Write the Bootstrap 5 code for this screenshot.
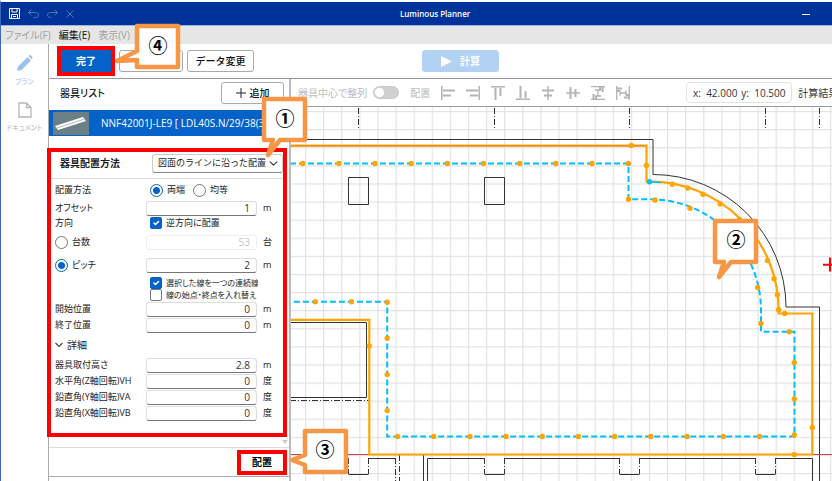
<!DOCTYPE html>
<html lang="ja">
<head>
<meta charset="utf-8">
<meta name="viewport" content="width=device-width, initial-scale=1">
<title>Luminous Planner</title>
<link href="https://cdn.jsdelivr.net/npm/bootstrap@5.3.0/dist/css/bootstrap.min.css" rel="stylesheet">
<style>
body{font-family:"Open Sans","Noto Sans CJK JP",sans-serif;font-size:10px;line-height:14px;color:#222;font-feature-settings:"palt";background:#fff;overflow-x:hidden}
.app{border-left:1px solid #3f68b8;border-top:2px solid #fff;min-height:100vh}
.titlebar{background:#039;height:24px;color:#fff;border-bottom:1px solid #9fb2dc}
.titlebar .side{flex:0 0 48%}
.titlebar .side-end{padding-right:22px}
.app-name{font-size:8px}
.titlebar button,.tool{background:none;border:0;padding:0;line-height:0;color:inherit}
.menubar{background:#e6e6e6;height:18px;font-size:10px;line-height:18px;gap:8px;padding-left:4px}
.menubar a{color:#a0a0a0;text-decoration:none}
.menubar a.current{color:#111}
.rail{width:47px;flex:none;font-size:7px;padding-top:11px;gap:14px}
.rail a{color:#b5b5b5;text-decoration:none;line-height:12px}
.rail a.current{color:#9cc3ec}
.workspace{border-left:1px solid #aaa;min-width:0}
.actions{height:35px;border-bottom:1px solid #999;padding-left:8px;gap:4px}
.mark-red{border:4px solid red}
.btn-app{--bs-btn-padding-y:0;--bs-btn-padding-x:0;--bs-btn-font-size:10px;--bs-btn-border-radius:3px;--bs-btn-line-height:14px;--bs-btn-color:#111;--bs-btn-border-color:#aaa;--bs-btn-bg:#fff;height:22px;font-weight:500}
.btn-done{--bs-btn-color:#fff;--bs-btn-bg:#0562c8;--bs-btn-border-color:#0562c8;--bs-btn-border-radius:0;width:50px;font-weight:700}
.btn-mid{width:64px}
.btn-data{width:67px}
.btn-calc{--bs-btn-color:#fff;--bs-btn-bg:#b3d1f2;--bs-btn-border-color:#b3d1f2;width:77px;font-weight:700;margin-left:164px}
.panel{width:242px;flex:none;border-right:2px solid #bbb}
.panel-head{height:31px;padding:0 5px 3px 11px;font-weight:500}
.btn-add{width:63px}
.fixture{background:#0562c8;color:#fff;height:26px;padding-left:4px;gap:12px;white-space:nowrap;overflow:hidden}
.method{margin:12px 2px 0 -2px;padding-bottom:12px}
.method-head{height:27px;border-bottom:1px solid #ddd;padding:0 0 4px 9px;font-weight:700}
.method select{width:131px;height:19px;border:1px solid #ccc;border-bottom-color:#888;border-radius:3px;font-size:9px;font-weight:400;line-height:14px;padding:0 16px 0 5px;background-size:9px;background-position:right 4px center}
.line{padding-left:4px;font-size:9px}
.h12{height:12px}.h14{height:14px}.h16{height:16px}.h22{height:22px}.h24{height:24px}
.line .cap{width:91px;flex:none;white-space:nowrap}
.num{width:111px;flex:none;height:15px;border:1px solid #ddd;border-bottom-color:#777;border-radius:3px;text-align:right;font-size:10px;line-height:13px;padding:0 6px;color:#333;background:#fff}
.num:disabled{color:#c4c4c4;border-color:#eee;background:#fff}
.unit{padding-left:6px}
.line .form-check-input{margin:0;width:13px;height:13px;border-color:#777;flex:none}
.line .form-check-input[type=checkbox]{width:12px;height:12px;border-radius:2px}
.line .form-check-input:checked{background-color:#0562c8;border-color:#0562c8}
.line .form-check-input[type=radio]:checked{background:radial-gradient(#0562c8 0 3px,#fff 4px)}
.opts{width:112px;overflow:hidden;white-space:nowrap}
.small-opts{font-size:8px}
.detail{font-size:10px;line-height:14px}
.scroll-end{height:10px;padding:0 1px}
.foot{height:30px;border-top:1px solid #ddd;border-bottom:1px solid #aaa;padding-right:2px}
.btn-place{width:50px;height:25px;background:#fff;font-weight:700;font-size:10px;padding:0;line-height:14px}
.drawing{min-width:0}
.arrange{height:28px;border-bottom:1px solid #999;padding-left:7px;color:#bbb;white-space:nowrap;gap:11px}
.arrange .form-check-input{width:26px;height:13px;margin:0;background-color:#d0d0d0;border-color:#c8c8c8;opacity:1;--bs-form-switch-bg:url("data:image/svg+xml,%3csvg xmlns='http://www.w3.org/2000/svg' viewBox='-4 -4 8 8'%3e%3ccircle r='3.4' fill='%23fff'/%3e%3c/svg%3e")}
.arrange .form-switch{min-height:0;padding:0;gap:6px}
.readout{gap:6px;margin-left:45px;color:#333}
.coords{border:1px solid #e3e3e3;border-radius:4px;height:21px;width:106px;flex:none}
.callout-note{position:absolute;overflow:visible;pointer-events:none}
.callout-note path{fill:#fff;stroke:#f79646;stroke-width:4.5;stroke-linejoin:round}
.callout-note text{font:700 19px "Noto Sans CJK JP",sans-serif;text-anchor:middle;fill:#000}
.note-1{left:262px;top:97px}.note-2{left:713px;top:219px}.note-3{left:303px;top:429px}.note-4{left:135px;top:24px}
</style>
</head>
<body>
<div class="app position-relative">
  <header class="titlebar d-flex align-items-center">
    <div class="side d-flex align-items-center gap-2 ps-2">
      <button aria-label="保存"><svg width="11" height="11" viewBox="0 0 11 11" fill="none" stroke="#fff"><path d="M.5.5h10v10h-10zM3 .5v3.500h5v-3.500M2.500 10.500v-4h6v4M4 8.500h3"/></svg></button>
      <button aria-label="元に戻す"><svg width="11" height="9" viewBox="0 0 11 9" fill="none" stroke="#5274bd"><path d="M3.500.5l-3 3 3 3M.5 3.500h7c4 0 4 5 0 5h-2"/></svg></button>
      <button aria-label="やり直し"><svg width="11" height="9" viewBox="0 0 11 9" fill="none" stroke="#5274bd"><path d="M7.500.5l3 3-3 3M10.500 3.500h-7c-4 0-4 5 0 5h1"/></svg></button>
      <button aria-label="削除"><svg width="8" height="8" viewBox="0 0 8 8" stroke="#5274bd"><path d="M.5.5l7 7M7.500.5l-7 7"/></svg></button>
    </div>
    <div class="fw-semibold app-name text-nowrap">Luminous Planner</div>
    <div class="side-end flex-fill d-flex justify-content-end">
      <button aria-label="最小化"><svg width="8" height="8" viewBox="0 0 8 8" stroke="#fff"><path d="M0 4.500h8"/></svg></button>
    </div>
  </header>
  <nav class="menubar d-flex">
    <a href="#">ファイル(F)</a><a href="#" class="current">編集(E)</a><a href="#">表示(V)</a>
  </nav>
  <div class="d-flex">
    <nav class="rail d-flex flex-column align-items-center">
      <a href="#" class="current d-flex flex-column align-items-center gap-1"><svg width="17" height="17" viewBox="0 0 17 17" fill="#9cc3ec"><path d="M1 16l1-4.500L11.500 2l3.500 3.500L5.500 15zM12.500 1l1-.8c1-.6 3.500 1.800 3 3l-.8 1z"/></svg>プラン</a>
      <a href="#" class="d-flex flex-column align-items-center gap-1"><svg width="14" height="16" viewBox="0 0 14 16" fill="none" stroke="#b5b5b5" stroke-width="1.300"><path d="M1 1h7.500l4.500 4.500V15H1zM8.500 1v4.500H13"/></svg>ドキュメント</a>
    </nav>
    <div class="workspace flex-fill">
      <div class="actions d-flex align-items-center">
        <div class="mark-red d-flex"><button class="btn btn-app btn-done">完了</button></div>
        <button class="btn btn-app btn-mid" aria-label="キャンセル"></button>
        <button class="btn btn-app btn-data">データ変更</button>
        <button class="btn btn-app btn-calc d-flex align-items-center justify-content-center gap-2"><svg width="11" height="11" viewBox="0 0 11 11" fill="#fff"><path d="M0 0l11 5.500L0 11z"/></svg>計算</button>
      </div>
      <div class="d-flex">
        <section class="panel">
          <div class="panel-head d-flex align-items-center justify-content-between">
            <span>器具リスト</span>
            <button class="btn btn-app btn-add d-flex align-items-center justify-content-center gap-1"><svg width="10" height="10" viewBox="0 0 10 10" stroke="#222"><path d="M5 0v10M0 5h10"/></svg>追加</button>
          </div>
          <div class="fixture d-flex align-items-center">
            <svg class="flex-shrink-0" width="36" height="23" viewBox="0 0 36 23"><path fill="#6b7f86" d="M0 0h36v23H0z"/><path fill="#fff" d="M2 14L30 5l3 4L5 18z"/><path stroke="#b5bdc0" stroke-width="1.200" d="M4 16L31.500 7"/></svg>
            <span>NNF42001J-LE9 [ LDL40S.N/29/38(3</span>
          </div>
          <form class="method mark-red">
            <div class="method-head d-flex align-items-center justify-content-between">
              <label for="how">器具配置方法</label>
              <select id="how" class="form-select"><option>図面のラインに沿った配置</option></select>
            </div>
            <div class="line h22 d-flex align-items-center"><span class="cap">配置方法</span>
              <span class="opts d-flex align-items-center ps-1 gap-1"><input class="form-check-input" type="radio" name="dist" id="d1" checked><label for="d1" class="me-1">両端</label><input class="form-check-input" type="radio" name="dist" id="d2"><label for="d2">均等</label></span></div>
            <div class="line h14 d-flex align-items-center"><label class="cap" for="off">オフセット</label><input class="num" id="off" value="1"><span class="unit">m</span></div>
            <div class="line h16 d-flex align-items-center"><span class="cap">方向</span><span class="opts d-flex align-items-center gap-1 ps-1"><input class="form-check-input" type="checkbox" id="rev" checked><label for="rev">逆方向に配置</label></span></div>
            <div class="line h22 d-flex align-items-center"><span class="cap d-flex align-items-center gap-1"><input class="form-check-input" type="radio" name="by" id="b1"><label for="b1">台数</label></span><input class="num" value="53" aria-label="台数" disabled><span class="unit">台</span></div>
            <div class="line h24 d-flex align-items-center"><span class="cap d-flex align-items-center gap-1"><input class="form-check-input" type="radio" name="by" id="b2" checked><label for="b2">ピッチ</label></span><input class="num" value="2" aria-label="ピッチ"><span class="unit">m</span></div>
            <div class="line h12 d-flex align-items-center"><span class="cap"></span><span class="opts small-opts d-flex align-items-center gap-1 ps-1"><input class="form-check-input" type="checkbox" id="join" checked><label for="join">選択した線を一つの連続線</label></span></div>
            <div class="line h12 d-flex align-items-center"><span class="cap"></span><span class="opts small-opts d-flex align-items-center gap-1 ps-1"><input class="form-check-input" type="checkbox" id="swap"><label for="swap">線の始点・終点を入れ替え</label></span></div>
            <div class="line h16 d-flex align-items-center"><label class="cap" for="st">開始位置</label><input class="num" id="st" value="0"><span class="unit">m</span></div>
            <div class="line h16 d-flex align-items-center"><label class="cap" for="en">終了位置</label><input class="num" id="en" value="0"><span class="unit">m</span></div>
            <div class="line h24 d-flex align-items-center"><button type="button" class="tool d-flex align-items-center gap-1"><svg width="8" height="8" viewBox="0 0 8 8" fill="none" stroke="#444" stroke-width="1.200"><path d="M.5 2L4 5.500 7.500 2"/></svg><span class="detail">詳細</span></button></div>
            <div class="line h16 d-flex align-items-center"><label class="cap" for="hh">器具取付高さ</label><input class="num" id="hh" value="2.8"><span class="unit">m</span></div>
            <div class="line h16 d-flex align-items-center"><label class="cap" for="vh">水平角(Z軸回転)VH</label><input class="num" id="vh" value="0"><span class="unit">度</span></div>
            <div class="line h16 d-flex align-items-center"><label class="cap" for="va">鉛直角(Y軸回転)VA</label><input class="num" id="va" value="0"><span class="unit">度</span></div>
            <div class="line h16 d-flex align-items-center"><label class="cap" for="vb">鉛直角(X軸回転)VB</label><input class="num" id="vb" value="0"><span class="unit">度</span></div>
          </form>
          <div class="scroll-end d-flex align-items-center justify-content-end"><svg width="6" height="4" viewBox="0 0 6 4" fill="#ccc"><path d="M0 0h6L3 4z"/></svg></div>
          <div class="foot d-flex align-items-center justify-content-end"><button class="btn-place mark-red">配置</button></div>
        </section>
        <section class="drawing flex-fill">
          <div class="arrange d-flex align-items-center">
            <div class="form-switch d-flex align-items-center"><label for="snap">器具中心で整列</label><input class="form-check-input" type="checkbox" role="switch" id="snap" disabled></div>
            <span>配置</span>
            <button class="tool" aria-label="左揃え"><svg width="14" height="14" viewBox="0 0 14 14" stroke="#b4b4b4"><path stroke-width="1.500" d="M.8 0v14"/><path stroke-width="2" d="M2 4.500h12M2 9.500h8"/></svg></button>
            <button class="tool" aria-label="右揃え"><svg width="14" height="14" viewBox="0 0 14 14" stroke="#b4b4b4"><path stroke-width="1.500" d="M13.200 0v14"/><path stroke-width="2" d="M0 4.500h12M4 9.500h8"/></svg></button>
            <button class="tool" aria-label="上揃え"><svg width="14" height="14" viewBox="0 0 14 14" stroke="#b4b4b4"><path stroke-width="1.500" d="M0 .8h14"/><path stroke-width="2" d="M4.500 2v12M9.500 2v8"/></svg></button>
            <button class="tool" aria-label="下揃え"><svg width="14" height="14" viewBox="0 0 14 14" stroke="#b4b4b4"><path stroke-width="1.500" d="M0 13.200h14"/><path stroke-width="2" d="M4.500 0v12M9.500 5v7"/></svg></button>
            <button class="tool" aria-label="左右中央"><svg width="14" height="14" viewBox="0 0 14 14" stroke="#b4b4b4"><path stroke-width="1.500" d="M7 0v14"/><path stroke-width="2" d="M1 4.500h12M3 9.500h8"/></svg></button>
            <button class="tool" aria-label="上下中央"><svg width="14" height="14" viewBox="0 0 14 14" stroke="#b4b4b4"><path stroke-width="1.500" d="M0 7h14"/><path stroke-width="2" d="M4.500 1v12M9.500 3v8"/></svg></button>
            <button class="tool" aria-label="上下等間隔"><svg width="14" height="14" viewBox="0 0 14 14" stroke="#b4b4b4" fill="none"><path stroke-width="1.300" d="M0 .7h14M0 13.300h14M4 4h6M4 10h6M7 4v6"/><path stroke-width="2" d="M2.500 8v5M5 10v3M9 1v3M11.500 1v5"/></svg></button>
            <button class="tool" aria-label="左右等間隔"><svg width="14" height="14" viewBox="0 0 14 14" stroke="#b4b4b4" fill="none"><path stroke-width="1.300" d="M.7 0v14M13.300 0v14M4 4.500v5M10 4.500v5M4 7h6"/><path stroke-width="2" d="M1 2.500h5M1 5h3M10 9h3M8 11.500h5"/></svg></button>
            <div class="readout d-flex align-items-center">
              <div class="coords d-flex align-items-center justify-content-center gap-1"><span>x:&nbsp; 42.000</span><span>y:&nbsp; 10.500</span></div>
              <span>計算結果</span>
            </div>
          </div>
          <svg class="d-block w-100 h-auto" viewBox="291 107 541 374" fill="none" role="img" aria-label="平面図">
            <defs><pattern id="grid" x="305" y="111" width="18.100" height="18.100" patternUnits="userSpaceOnUse"><path d="M.6 0v18.100M0 .6h18.100" stroke="#e2e2e2" stroke-width="1.200"/></pattern></defs>
            <path fill="url(#grid)" d="M291 107h541v374H291z"/>
            <g stroke="#333">
              <path d="M290 139.500H653V174.500A133 133 0 0 1 786 307H819.500V481"/>
              <path d="M348.500 177.500h20v27h-20zM484.500 177.500h20v27h-20zM290 322.500h76.500v75H290M290 458.500h58.500M348.500 474.500h20M368.500 458.500h27M423.500 455v26M427.500 481v-22.500h57M484.500 474.500h20M504.500 458.500h115M619.500 474.500h20M639.500 458.500h116M755.500 474.500h20M775.500 458.500h37V481"/>
              <path stroke-dasharray="6 2 1 2" d="M358.500 108v21M494.500 108v21M629.500 108v21M765.500 108v21M819.500 108v21M290 400.500h79M348.500 458v16M368.500 458v16M395.500 458v23M399.500 455v26M484.500 458v16M504.500 458v16M619.500 458v16M639.500 458v16M755.500 458v16M775.500 458v16"/>
            </g>
            <path stroke="#c44" d="M290 454.500h79M812 454.500h20"/>
            <path stroke="#00bfff" stroke-width="2" stroke-dasharray="6 3" d="M290 163.500H628.500V199.300H650A111 111 0 0 1 761 310V331.700H794.500V436.500H387.200V301.800H290"/>
            <path stroke="#ffa500" stroke-width="2.200" d="M290 145.500H646.500V181.700H650A128.500 128.500 0 0 1 778.600 310V313.500H812.300V454.500H369.300V319.800H290"/>
            <path stroke="#d97f10" d="M291 146h354"/>
            <path stroke="#00bfff" stroke-width="1.500" d="M649 181.700l12 .8"/>
            <path stroke="#ffa500" stroke-width="5.400" stroke-linecap="round" d="M302.700 163.500h0M338.900 163.500h0M375 163.500h0M411.200 163.500h0M447.400 163.500h0M483.500 163.500h0M519.700 163.500h0M555.900 163.500h0M592 163.500h0M628.300 163.500h0M628.500 199.300h0M655 200h0M690 208.200h0M757.700 287.500h0M761 323.500h0M789.300 331.700h0M794.300 362.600h0M794.300 399h0M794.300 435h0M397.700 436.500h0M433.700 436.500h0M469.900 436.500h0M506 436.500h0M542.200 436.500h0M578.300 436.500h0M614.600 436.500h0M650.700 436.500h0M687 436.500h0M723.300 436.500h0M759.400 436.500h0M387.200 302.300h0M387.200 338.300h0M387.200 374.600h0M387.200 410.600h0M315.300 301.800h0M351.400 301.800h0M631.300 145.400h0M646.500 165.500h0M672.300 184.200h0M687.700 188h0M703 194.300h0M720.200 204h0M739.500 219.500h0M767.500 260.500h0M774 278.700h0M777.400 294.800h0M778.600 309.700h0M784.700 313.500h0M369.300 346h0M812.300 427.500h0M794.300 454.500h0"/>
            <circle cx="649.500" cy="181.700" r="2.700" fill="#00bfff"/>
            <path stroke="red" stroke-width="2" d="M823 264.700h14M830 257.500v14"/>
          </svg>
        </section>
      </div>
    </div>
  </div>
</div>
<svg class="callout-note note-1" width="46" height="46" viewBox="0 0 46 46"><path d="M2 2H43V43H18L6 58 11 43H2z"/><text x="23" y="29">①</text></svg>
<svg class="callout-note note-2" width="46" height="46" viewBox="0 0 46 46"><path d="M2 2H43V43H18L6 58 11 43H2z"/><text x="23" y="28">②</text></svg>
<svg class="callout-note note-3" width="46" height="46" viewBox="0 0 46 46"><path d="M2 2H43V43H2V36L-11 31 2 26z"/><text x="22" y="28">③</text></svg>
<svg class="callout-note note-4" width="46" height="46" viewBox="0 0 46 46"><path d="M2 2H43V43H2V36L-18 37 2 27z"/><text x="23" y="29">④</text></svg>
<script src="https://cdn.jsdelivr.net/npm/bootstrap@5.3.0/dist/js/bootstrap.bundle.min.js"></script>
</body>
</html>
